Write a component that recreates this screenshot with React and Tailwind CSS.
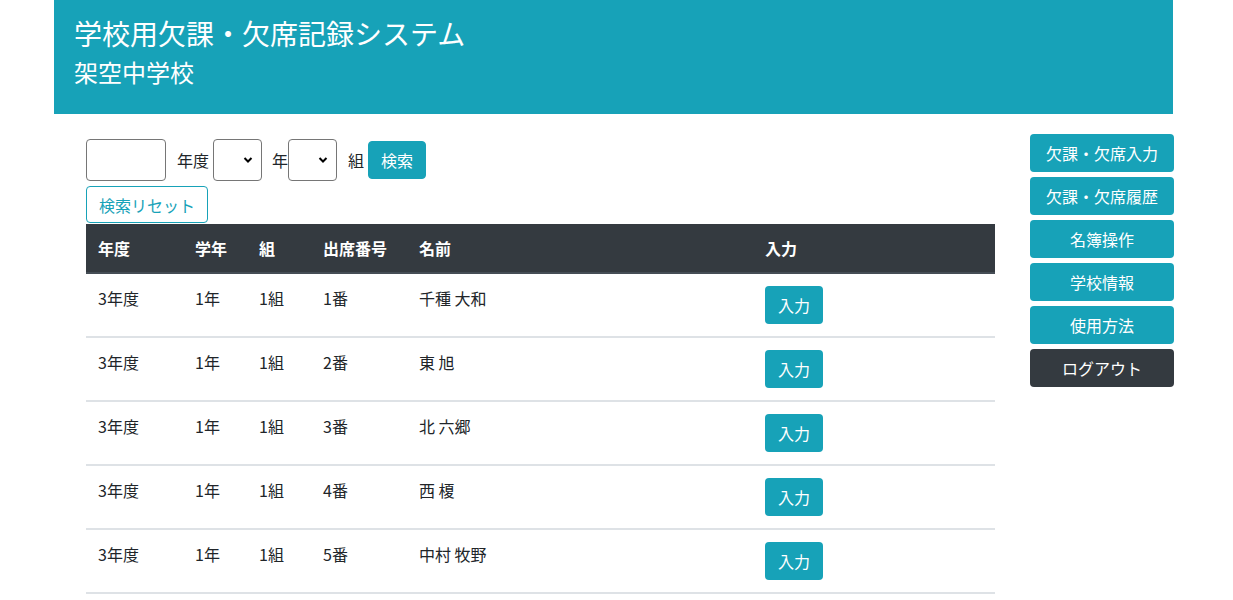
import React from "react";

const rows = [
  ["3年度", "1年", "1組", "1番", "千種 大和"],
  ["3年度", "1年", "1組", "2番", "東 旭"],
  ["3年度", "1年", "1組", "3番", "北 六郷"],
  ["3年度", "1年", "1組", "4番", "西 榎"],
  ["3年度", "1年", "1組", "5番", "中村 牧野"],
];

function Select() {
  return (
    <div className="relative w-[49px] h-[42px] border border-[#767676] rounded-[4px] bg-white">
      <svg className="absolute right-[8px] top-[16px]" width="10" height="8" viewBox="0 0 10 8">
        <path d="M1.5 2 L5 5.5 L8.5 2" fill="none" stroke="#000" strokeWidth="2" />
      </svg>
    </div>
  );
}

const sideBtns = ["欠課・欠席入力", "欠課・欠席履歴", "名簿操作", "学校情報", "使用方法"];

export default function App() {
  return (
    <div
      className="w-[1233px] h-[600px] overflow-hidden bg-white text-[#212529] text-[16px]"
      style={{ fontFamily: '"Noto Sans CJK JP", "Noto Sans", sans-serif' }}
    >
      <div className="ml-[54px] w-[1121px]">
        <header className="bg-[#17a2b8] text-white pl-[20px] pt-[14px] h-[114px] w-[1119px]">
          <div className="text-[28px] leading-[38px]">学校用欠課・欠席記録システム</div>
          <div className="text-[24px] leading-[32px] mt-[4px]">架空中学校</div>
        </header>
        <div className="flex pl-[32px]">
          <div className="w-[909px] shrink-0 pt-[25px]">
            <div className="flex items-center">
              <div className="w-[80px] h-[42px] border border-[#767676] rounded-[4px]" />
              <span className="ml-[11px] mr-[4px] leading-[24px]">年度</span>
              <Select />
              <span className="ml-[10px] leading-[24px]">年</span>
              <Select />
              <span className="ml-[11px] mr-[4px] leading-[24px]">組</span>
              <button className="h-[38px] px-[12px] bg-[#17a2b8] text-white rounded-[4px] border border-[#17a2b8] leading-[24px]">
                検索
              </button>
            </div>
            <button className="mt-[5px] h-[37px] px-[12px] text-[#17a2b8] border border-[#17a2b8] rounded-[4px] leading-[24px] bg-white">
              検索リセット
            </button>
            <table className="w-full border-collapse mt-[1px]">
              <thead>
                <tr className="bg-[#343a40] text-white">
                  <th className="text-left font-bold px-[12px] py-[12px] leading-[24px] border-b-2 border-[#454d55] w-[97px]">年度</th>
                  <th className="text-left font-bold px-[12px] py-[12px] leading-[24px] border-b-2 border-[#454d55] w-[64px]">学年</th>
                  <th className="text-left font-bold px-[12px] py-[12px] leading-[24px] border-b-2 border-[#454d55] w-[64px]">組</th>
                  <th className="text-left font-bold px-[12px] py-[12px] leading-[24px] border-b-2 border-[#454d55] w-[96px]">出席番号</th>
                  <th className="text-left font-bold px-[12px] py-[12px] leading-[24px] border-b-2 border-[#454d55] w-[346px]">名前</th>
                  <th className="text-left font-bold px-[12px] py-[12px] leading-[24px] border-b-2 border-[#454d55]">入力</th>
                </tr>
              </thead>
              <tbody>
                {rows.map((r, i) => (
                  <tr key={i} className="border-b-2 border-[#dee2e6]">
                    {r.map((c, j) => (
                      <td key={j} className="px-[12px] pt-[12px] pb-[12px] align-top leading-[24px]">{c}</td>
                    ))}
                    <td className="px-[12px] pt-[12px] pb-[12px] align-top">
                      <button className="block h-[38px] w-[58px] bg-[#17a2b8] text-white rounded-[4px] leading-[24px]">入力</button>
                    </td>
                  </tr>
                ))}
              </tbody>
            </table>
          </div>
          <div className="ml-[35px] w-[144px] shrink-0 pt-[20px] flex flex-col gap-[5px]">
            {sideBtns.map((b) => (
              <button key={b} className="h-[38px] w-full bg-[#17a2b8] text-white rounded-[4px] leading-[24px]">{b}</button>
            ))}
            <button className="h-[38px] w-full bg-[#343a40] text-white rounded-[4px] leading-[24px]">ログアウト</button>
          </div>
        </div>
      </div>
    </div>
  );
}
